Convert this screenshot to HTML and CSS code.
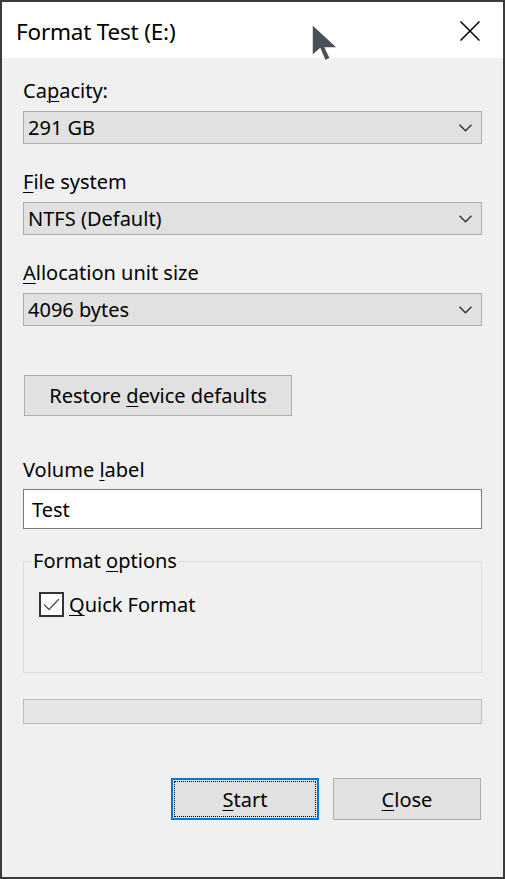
FILE: index.html
```html
<!DOCTYPE html>
<html>
<head>
<meta charset="utf-8">
<link rel="stylesheet" href="styles.css">
</head>
<body>
<div class="window">
  <div class="titlebar">
    <span class="title">Format Test (E:)</span>
    <svg class="close-x" width="20" height="20" viewBox="0 0 20 20"><path d="M0.5 0.5 L19.5 19.5 M19.5 0.5 L0.5 19.5" stroke="#000" stroke-width="1.5" fill="none"/></svg>
  </div>
  <div class="content">
    <div class="label">Ca<u>p</u>acity:</div>
    <div class="select"><span>291 GB</span><svg class="chev" width="13" height="8" viewBox="0 0 13 8"><path d="M0.5 0.8 L6.5 6.8 L12.5 0.8" stroke="#333" stroke-width="1.4" fill="none"/></svg></div>
    <div class="label"><u>F</u>ile system</div>
    <div class="select"><span>NTFS (Default)</span><svg class="chev" width="13" height="8" viewBox="0 0 13 8"><path d="M0.5 0.8 L6.5 6.8 L12.5 0.8" stroke="#333" stroke-width="1.4" fill="none"/></svg></div>
    <div class="label"><u>A</u>llocation unit size</div>
    <div class="select"><span>4096 bytes</span><svg class="chev" width="13" height="8" viewBox="0 0 13 8"><path d="M0.5 0.8 L6.5 6.8 L12.5 0.8" stroke="#333" stroke-width="1.4" fill="none"/></svg></div>
    <div class="btn restore"><span>Restore <u>d</u>evice defaults</span></div>
    <div class="label vol">Volume <u>l</u>abel</div>
    <div class="textbox">Test</div>
    <fieldset class="group">
      <legend>Format <u>o</u>ptions</legend>
      <div class="group-body">
        <div class="check-row">
          <span class="checkbox"><svg width="21" height="21" viewBox="0 0 21 21"><path d="M3 10.5 L8 15.5 L18 5" stroke="#555" stroke-width="1.4" fill="none"/></svg></span>
          <span class="check-label"><u>Q</u>uick Format</span>
        </div>
      </div>
    </fieldset>
    <div class="progress"></div>
    <div class="actions">
      <div class="btn action primary"><span class="focus"><span><u>S</u>tart</span></span></div>
      <div class="btn action"><span><u>C</u>lose</span></div>
    </div>
  </div>
  <svg class="cursor" width="30" height="40" viewBox="0 0 30 40"><path d="M1 1 L1 33 L9 26 L14 38 L19.5 35.5 L14.5 25 L27 25 Z" fill="#4b5056" stroke="#fff" stroke-width="1.5" stroke-linejoin="miter"/></svg>
</div>
</body>
</html>
```
FILE: styles.css
```css
html, body {
  margin: 0;
  padding: 0;
  background: #3b3b3b;
}
.window {
  position: relative;
  width: 505px;
  height: 879px;
  box-sizing: border-box;
  border: 2px solid #3b3b3b;
  background: #f0f0f0;
  font-family: "Noto Sans", "Open Sans", sans-serif;
  font-size: 20px;
  color: #000;
  overflow: hidden;
}
u {
  text-decoration-thickness: 1px;
  text-underline-offset: 3px;
}
.titlebar {
  height: 56px;
  background: #fff;
  display: flex;
  align-items: center;
  justify-content: space-between;
  padding: 0 23px 0 14px;
}
.title {
  font-size: 22.5px;
  letter-spacing: -0.2px;
  margin-top: 2px;
}
.close-x {
  display: block;
  margin-top: 2px;
}
.content {
  padding: 19px 21px 0 21px;
}
.label {
  height: 28px;
  line-height: 28px;
  margin-bottom: 6px;
}
.select {
  height: 33px;
  box-sizing: border-box;
  border: 1px solid #adadad;
  background: #e1e1e1;
  display: flex;
  align-items: center;
  justify-content: space-between;
  padding: 0 9px 0 4px;
  margin-bottom: 24px;
}
.chev {
  display: block;
  margin-top: 1px;
}
.btn {
  box-sizing: border-box;
  border: 1px solid #adadad;
  background: #e1e1e1;
  display: flex;
  align-items: center;
  justify-content: center;
}
.restore {
  width: 268px;
  height: 41px;
  margin-left: 1px;
  margin-top: 49px;
}
.label.vol {
  margin-top: 40px;
  margin-bottom: 5px;
}
.textbox {
  height: 40px;
  box-sizing: border-box;
  border: 1px solid #7a7a7a;
  background: #fff;
  padding: 0 8px;
  display: flex;
  align-items: center;
}
.group {
  margin: 18px 0 0 0;
  padding: 0 0 0 8px;
  border: 1px solid #dcdcdc;
  min-width: 0;
}
.group legend {
  padding: 0 1px;
  line-height: 28px;
  height: 28px;
}
.group-body {
  height: 97px;
  box-sizing: border-box;
  padding-top: 16px;
}
.check-row {
  display: flex;
  align-items: center;
  margin-left: 7px;
}
.checkbox {
  width: 25px;
  height: 25px;
  box-sizing: border-box;
  border: 2px solid #333;
  background: #fff;
  display: flex;
  align-items: center;
  justify-content: center;
}
.checkbox svg {
  display: block;
}
.check-label {
  margin-left: 5px;
}
.progress {
  margin-top: 26px;
  height: 25px;
  box-sizing: border-box;
  border: 1px solid #bcbcbc;
  background: #e6e6e6;
}
.actions {
  margin-top: 54px;
  display: flex;
  justify-content: flex-end;
  gap: 14px;
  padding-right: 1px;
}
.action {
  width: 148px;
  height: 42px;
}
.primary {
  border: 2px solid #0078d7;
  padding: 1px;
}
.primary .focus {
  flex: 1;
  align-self: stretch;
  border: 1px dotted #000;
  display: flex;
  align-items: center;
  justify-content: center;
}
.cursor {
  position: absolute;
  left: 309px;
  top: 21px;
}
```
